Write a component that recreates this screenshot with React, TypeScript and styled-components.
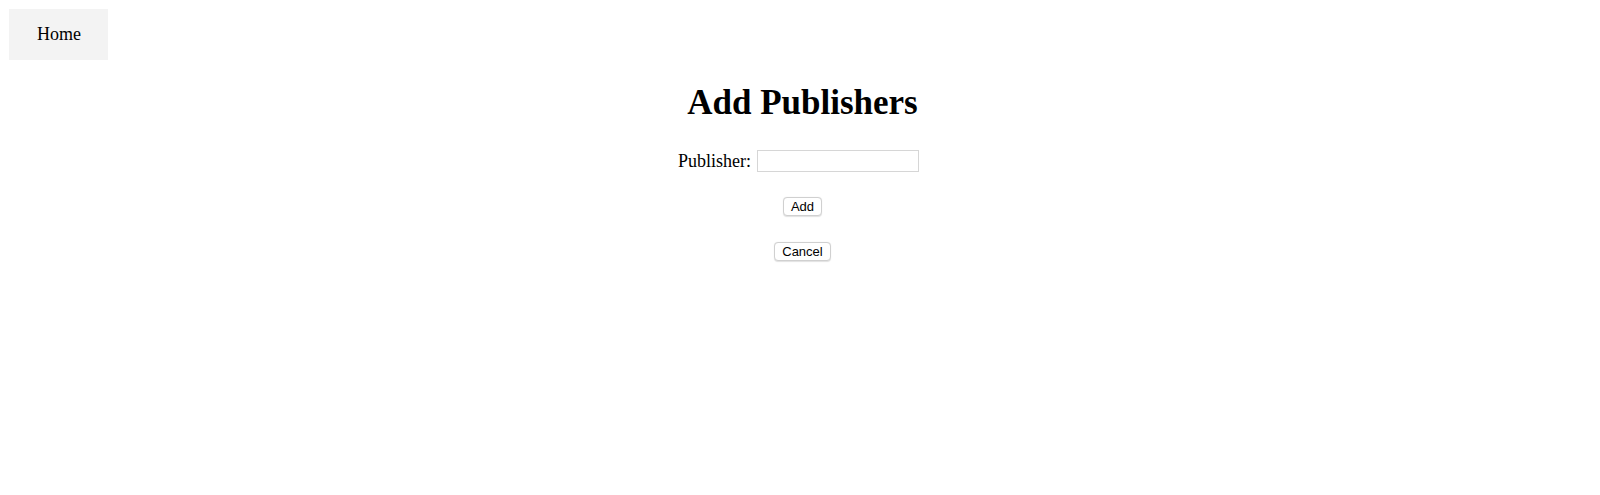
import React from "react";
import styled, { createGlobalStyle } from "styled-components";

const GlobalStyle = createGlobalStyle`
  html, body {
    margin: 0;
    padding: 0;
    background: #ffffff;
    color: #000000;
    font-family: "Liberation Serif", "Times New Roman", serif;
  }
`;

const Page = styled.div`
  padding: 9px;
  display: flex;
  flex-direction: column;
`;

const Nav = styled.nav`
  display: flex;
`;

const NavLink = styled.a`
  display: block;
  background: #f3f3f3;
  color: #000;
  text-decoration: none;
  font-size: 18px;
  line-height: 21px;
  padding: 15px 27px 15px 28px;
`;

const Main = styled.main`
  display: flex;
  flex-direction: column;
  align-items: center;
  padding-left: 5px;
  margin-top: 23px;
`;

const Title = styled.h1`
  margin: 0;
  font-size: 35px;
  line-height: 40px;
  font-weight: bold;
`;

const Form = styled.form`
  display: flex;
  flex-direction: column;
  align-items: center;
`;

const Row = styled.div`
  display: flex;
  align-items: center;
  gap: 6px;
  margin-top: 27px;
  margin-right: 8px;
`;

const Label = styled.label`
  font-size: 18px;
  line-height: 21px;
`;

const Input = styled.input`
  box-sizing: border-box;
  width: 162px;
  height: 22px;
  border: 1px solid #d6d6d6;
  background: #fff;
  padding: 1px 3px;
  font-size: 13px;
  outline: none;
`;

const Button = styled.button<{ $gap: number }>`
  box-sizing: border-box;
  margin-top: ${(p) => p.$gap}px;
  height: 19px;
  padding: 0 7px;
  border: 1px solid #d0d0d0;
  border-radius: 4px;
  background: #ffffff;
  box-shadow: 0 0.5px 1px rgba(0, 0, 0, 0.12);
  font-family: "Liberation Sans", Arial, sans-serif;
  font-size: 13px;
  line-height: 17px;
  color: #000;
`;

export default function App() {
  return (
    <>
      <GlobalStyle />
      <Page>
        <Nav>
          <NavLink href="#">Home</NavLink>
        </Nav>
        <Main>
          <Title>Add Publishers</Title>
          <Form onSubmit={(e) => e.preventDefault()}>
            <Row>
              <Label htmlFor="publisher">Publisher:</Label>
              <Input id="publisher" type="text" />
            </Row>
            <Button type="submit" $gap={25}>Add</Button>
            <Button type="button" $gap={26}>Cancel</Button>
          </Form>
        </Main>
      </Page>
    </>
  );
}
